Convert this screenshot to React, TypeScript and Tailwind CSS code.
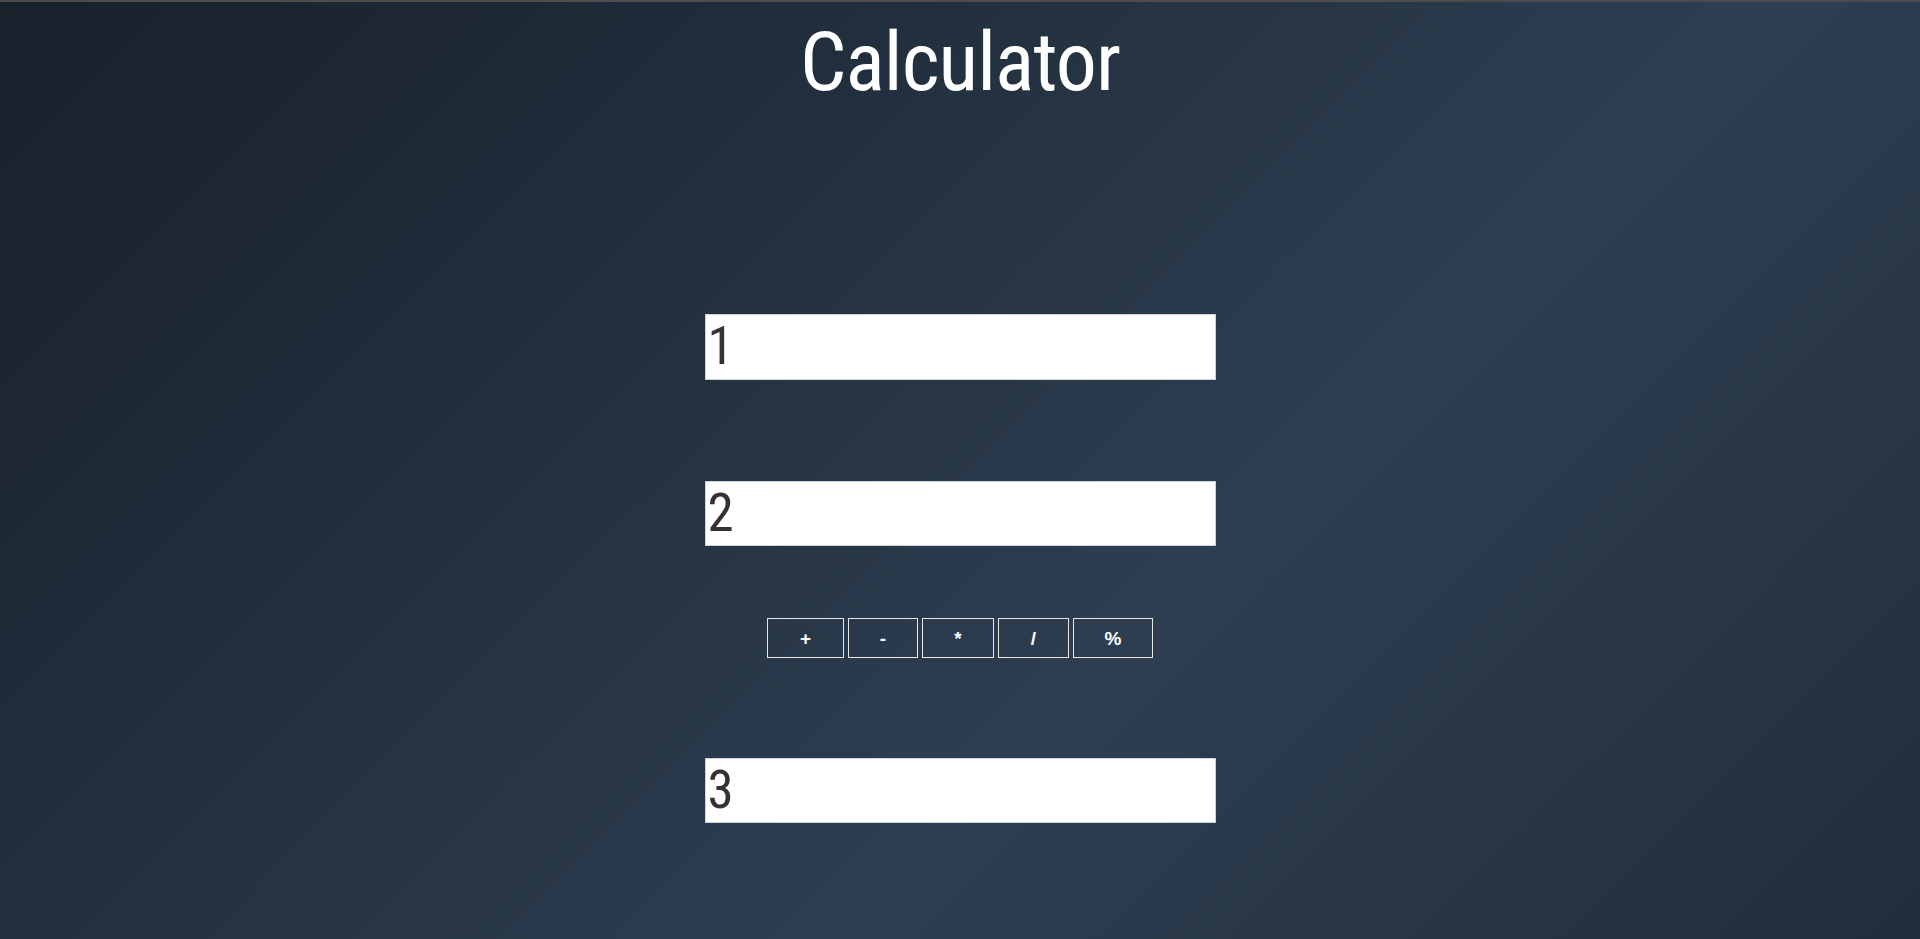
import { useState } from "react";

const ops = [
  { label: "+", w: "w-[77px]" },
  { label: "-", w: "w-[70px]" },
  { label: "*", w: "w-[72px]" },
  { label: "/", w: "w-[71px]" },
  { label: "%", w: "w-[80px]" },
];

export default function App() {
  const [a, setA] = useState("1");
  const [b, setB] = useState("2");
  const [result, setResult] = useState("3");

  function calc(op: string) {
    const x = Number(a);
    const y = Number(b);
    let r = 0;
    if (op === "+") r = x + y;
    if (op === "-") r = x - y;
    if (op === "*") r = x * y;
    if (op === "/") r = x / y;
    if (op === "%") r = x % y;
    setResult(String(r));
  }

  return (
    <div className="min-h-[939px] w-full border-t-2 border-[#4d4d4d] bg-[linear-gradient(135deg,#19212b_0%,#222f3e_33%,#2e3e51_62%,#212d3b_100%)] font-['Roboto',sans-serif]">
      <div className="flex flex-col items-center">
        <h1 className="mt-[19px] h-[82px] text-[82px] leading-[82px] font-normal tracking-[-1px] text-white font-stretch-[85%]">
          Calculator
        </h1>

        <input
          className="mt-[211px] h-[66px] w-[511px] border border-[#cfd3d6] bg-white px-[2px] text-[53px] text-[#333] outline-none font-stretch-[85%]"
          value={a}
          onChange={(e) => setA(e.target.value)}
        />

        <input
          className="mt-[101px] h-[65px] w-[511px] border border-[#cfd3d6] bg-white px-[2px] text-[53px] text-[#333] outline-none font-stretch-[85%]"
          value={b}
          onChange={(e) => setB(e.target.value)}
        />

        <div className="mt-[72px] flex gap-[4px]">
          {ops.map((op) => (
            <button
              key={op.label}
              onClick={() => calc(op.label)}
              className={`${op.w} h-[40px] border border-[#e6e6e6] bg-transparent pt-[2px] text-[19px] font-bold text-white font-['Liberation_Sans',sans-serif]`}
            >
              {op.label}
            </button>
          ))}
        </div>

        <input
          className="mt-[100px] h-[65px] w-[511px] border border-[#cfd3d6] bg-white px-[2px] text-[53px] text-[#333] outline-none font-stretch-[85%]"
          value={result}
          readOnly
        />
      </div>
    </div>
  );
}
